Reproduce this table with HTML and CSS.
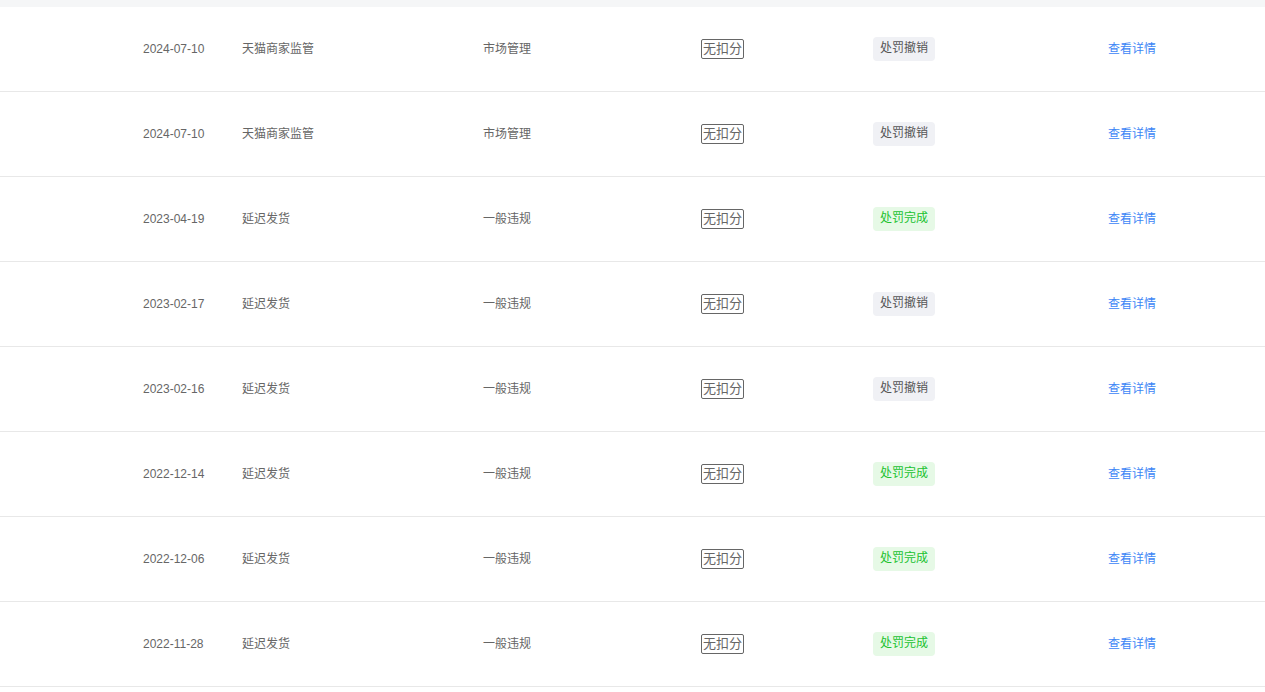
FILE: index.html
```html
<!DOCTYPE html>
<html lang="zh-CN">
<head>
<meta charset="utf-8">
<title>处罚记录</title>
<link rel="stylesheet" href="styles.css">
</head>
<body>
<div class="topband"></div>
<div class="list">
  <div class="row">
    <div class="c-date">2024-07-10</div>
    <div class="c-title">天猫商家监管</div>
    <div class="c-cat">市场管理</div>
    <div class="c-pts"><span class="pts">无扣分</span></div>
    <div class="c-status"><span class="tag tag-revoked">处罚撤销</span></div>
    <div class="c-link"><a class="link" href="#">查看详情</a></div>
  </div>
  <div class="row">
    <div class="c-date">2024-07-10</div>
    <div class="c-title">天猫商家监管</div>
    <div class="c-cat">市场管理</div>
    <div class="c-pts"><span class="pts">无扣分</span></div>
    <div class="c-status"><span class="tag tag-revoked">处罚撤销</span></div>
    <div class="c-link"><a class="link" href="#">查看详情</a></div>
  </div>
  <div class="row">
    <div class="c-date">2023-04-19</div>
    <div class="c-title">延迟发货</div>
    <div class="c-cat">一般违规</div>
    <div class="c-pts"><span class="pts">无扣分</span></div>
    <div class="c-status"><span class="tag tag-done">处罚完成</span></div>
    <div class="c-link"><a class="link" href="#">查看详情</a></div>
  </div>
  <div class="row">
    <div class="c-date">2023-02-17</div>
    <div class="c-title">延迟发货</div>
    <div class="c-cat">一般违规</div>
    <div class="c-pts"><span class="pts">无扣分</span></div>
    <div class="c-status"><span class="tag tag-revoked">处罚撤销</span></div>
    <div class="c-link"><a class="link" href="#">查看详情</a></div>
  </div>
  <div class="row">
    <div class="c-date">2023-02-16</div>
    <div class="c-title">延迟发货</div>
    <div class="c-cat">一般违规</div>
    <div class="c-pts"><span class="pts">无扣分</span></div>
    <div class="c-status"><span class="tag tag-revoked">处罚撤销</span></div>
    <div class="c-link"><a class="link" href="#">查看详情</a></div>
  </div>
  <div class="row">
    <div class="c-date">2022-12-14</div>
    <div class="c-title">延迟发货</div>
    <div class="c-cat">一般违规</div>
    <div class="c-pts"><span class="pts">无扣分</span></div>
    <div class="c-status"><span class="tag tag-done">处罚完成</span></div>
    <div class="c-link"><a class="link" href="#">查看详情</a></div>
  </div>
  <div class="row">
    <div class="c-date">2022-12-06</div>
    <div class="c-title">延迟发货</div>
    <div class="c-cat">一般违规</div>
    <div class="c-pts"><span class="pts">无扣分</span></div>
    <div class="c-status"><span class="tag tag-done">处罚完成</span></div>
    <div class="c-link"><a class="link" href="#">查看详情</a></div>
  </div>
  <div class="row">
    <div class="c-date">2022-11-28</div>
    <div class="c-title">延迟发货</div>
    <div class="c-cat">一般违规</div>
    <div class="c-pts"><span class="pts">无扣分</span></div>
    <div class="c-status"><span class="tag tag-done">处罚完成</span></div>
    <div class="c-link"><a class="link" href="#">查看详情</a></div>
  </div>
</div>
</body>
</html>
```
FILE: styles.css
```css
html, body {
  margin: 0;
  padding: 0;
  background: #ffffff;
}
body {
  font-family: "Liberation Sans", "Noto Sans CJK SC", sans-serif;
  font-size: 12px;
  color: #666666;
}
.topband {
  height: 7px;
  background: #f5f6f7;
}
.list {
  display: flex;
  flex-direction: column;
}
.row {
  display: flex;
  align-items: center;
  height: 84px;
  border-bottom: 1px solid #e8e8e8;
  padding-left: 143px;
  line-height: 16px;
}
.c-date { width: 99px; }
.c-title { width: 241px; }
.c-cat { width: 218px; }
.c-pts { width: 172px; display: flex; }
.c-status { width: 235px; display: flex; }
.c-link { flex: 1; }
.pts {
  display: inline-block;
  box-sizing: border-box;
  height: 20px;
  line-height: 17px;
  padding: 0 1px;
  border: 1px solid #666666;
  border-radius: 2px;
  font-size: 13px;
  color: #666666;
}
.tag {
  display: inline-block;
  height: 24px;
  line-height: 23px;
  padding: 0 7px;
  border-radius: 4px;
  font-size: 12px;
}
.tag-revoked {
  background: #f0f1f5;
  color: #555555;
}
.tag-done {
  background: #e6f9e6;
  color: #20c230;
}
.link {
  color: #3d86f6;
  text-decoration: none;
  font-size: 12px;
}
```
